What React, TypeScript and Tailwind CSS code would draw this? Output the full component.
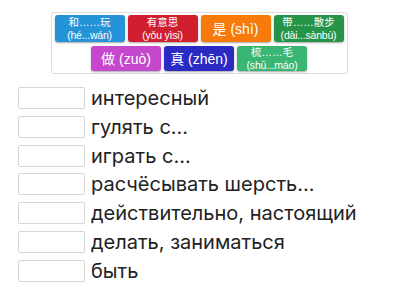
import React from 'react';

interface Tile {
  id: string;
  top: string;
  bottom?: string;
  color: string;
}

const tiles: Tile[] = [
  { id: '1', top: '和……玩', bottom: '(hé...wán)', color: 'bg-[#2593d8]' },
  { id: '2', top: '有意思', bottom: '(yǒu yìsi)', color: 'bg-[#d21f2f]' },
  { id: '3', top: '是 (shì)', color: 'bg-[#f67a0c]' },
  { id: '4', top: '带……散步', bottom: '(dài...sànbù)', color: 'bg-[#259447]' },
  { id: '5', top: '做 (zuò)', color: 'bg-[#c447cc]' },
  { id: '6', top: '真 (zhēn)', color: 'bg-[#2b2bc4]' },
  { id: '7', top: '梳……毛', bottom: '(shū...máo)', color: 'bg-[#39b574]' },
];

const answers = [
  'интересный',
  'гулять с...',
  'играть с...',
  'расчёсывать шерсть...',
  'действительно, настоящий',
  'делать, заниматься',
  'быть',
];

function TileCard({ tile }: { tile: Tile }) {
  return (
    <div
      className={`${tile.color} w-[70px] rounded-[3px] shadow-[0_1px_2px_rgba(0,0,0,0.35)] flex flex-col items-center justify-center text-white leading-none`}
    >
      {tile.bottom ? (
        <>
          <span className="text-[10.5px]">{tile.top}</span>
          <span className="text-[10.5px] mt-[2px] tracking-[-0.2px]">{tile.bottom}</span>
        </>
      ) : (
        <span className="text-[14px]">{tile.top}</span>
      )}
    </div>
  );
}

export default function App() {
  return (
    <div className="w-[400px] h-[300px] bg-white overflow-hidden font-['Liberation_Sans','Noto_Sans_CJK_SC',sans-serif]">
      <div className="pt-[12px] flex justify-center">
        <div className="w-[297px] h-[62px] ml-[-2px] border border-[#dcdcdc] rounded-[3px] flex flex-wrap justify-center content-start gap-x-[3px] gap-y-[4px] pt-[2px] px-[3px]">
          {tiles.slice(0, 4).map((t) => (
            <div key={t.id} className="h-[27px] flex">
              <TileCard tile={t} />
            </div>
          ))}
          {tiles.slice(4).map((t) => (
            <div key={t.id} className="h-[25px] flex">
              <TileCard tile={t} />
            </div>
          ))}
        </div>
      </div>

      <div className="mt-[13px] pl-[18px] flex flex-col gap-[6.8px]">
        {answers.map((a) => (
          <div key={a} className="flex items-center h-[22px]">
            <div className="w-[67px] h-[22px] border border-[#d6d6d6] rounded-[2px] bg-white" />
            <span className="ml-[6px] text-[20px] text-[#222] font-['Inter','Noto_Sans_CJK_SC',sans-serif] leading-none">
              {a}
            </span>
          </div>
        ))}
      </div>
    </div>
  );
}
